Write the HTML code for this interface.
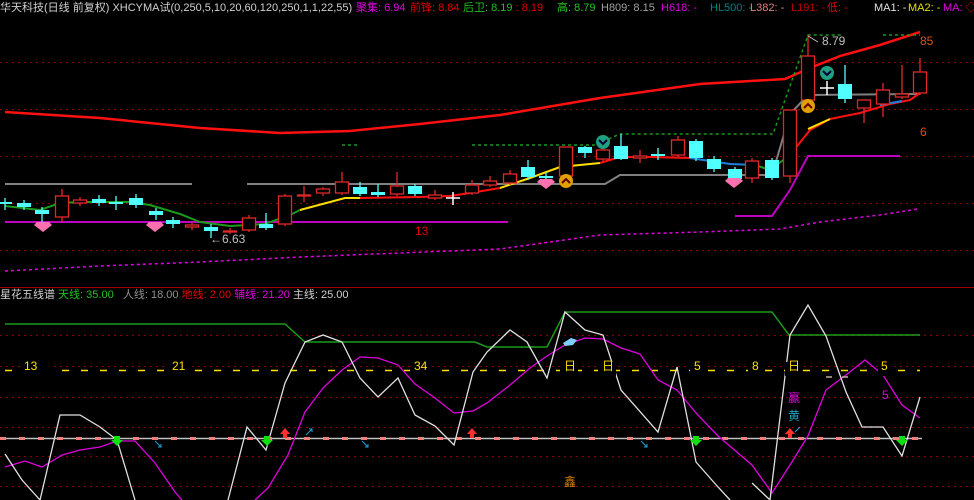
<!DOCTYPE html>
<html><head><meta charset="utf-8"><style>
body{margin:0;background:#000;width:974px;height:500px;overflow:hidden;font-family:"Liberation Sans","Noto Sans CJK SC",sans-serif}
.t{position:absolute;font-size:11px;white-space:nowrap;line-height:14px}
svg{position:absolute;left:0;top:0}
</style></head><body>
<svg width="974" height="500" viewBox="0 0 974 500">
<g stroke="#8a0000" stroke-dasharray="2,4" stroke-width="1">
<line x1="0" y1="62.5" x2="974" y2="62.5"/><line x1="0" y1="109.5" x2="974" y2="109.5"/><line x1="0" y1="156.5" x2="974" y2="156.5"/><line x1="0" y1="203.5" x2="974" y2="203.5"/><line x1="0" y1="250.5" x2="974" y2="250.5"/>
<line x1="0" y1="335.5" x2="974" y2="335.5"/><line x1="0" y1="366.5" x2="974" y2="366.5"/><line x1="0" y1="397.5" x2="974" y2="397.5"/><line x1="0" y1="427.5" x2="974" y2="427.5"/><line x1="0" y1="456.5" x2="974" y2="456.5"/><line x1="0" y1="486.5" x2="974" y2="486.5"/>
</g>
<line x1="0" y1="287.5" x2="974" y2="287.5" stroke="#a00000"/>
<polyline fill="none" stroke="#ff1010" stroke-width="2.5" points="5,112 100,118 200,128 280,133 350,131 420,124 500,115 600,98 700,84 785,79 810,68 840,56 880,45 920,32"/>
<polyline fill="none" stroke="#808080" stroke-width="2" points="5,184 192,184"/>
<polyline fill="none" stroke="#808080" stroke-width="2" points="247,184 605,184 620,175 772,175 790,114 808,95 920,94"/>
<g fill="none" stroke="#1a9a1a" stroke-dasharray="3,3" stroke-width="1.5">
<polyline points="342,145 360,145"/><polyline points="472,145 595,145 620,134 773,134 808,35 843,35"/><polyline points="883,35 920,35"/>
</g>
<polyline fill="none" stroke="#c000c0" stroke-width="2" points="5,222 508,222"/>
<polyline fill="none" stroke="#c000c0" stroke-width="2" points="735,216 772,216 790,190 808,156 900,156"/>
<polyline fill="none" stroke="#e000e0" stroke-width="1.5" stroke-dasharray="3,3" points="5,271 100,266 200,262 300,257 400,253 500,249 600,235 700,232 780,229 820,222 880,215 918,209"/>
<polyline fill="none" stroke="#1a9a1a" stroke-width="2" points="5,206 40,210 60,203 80,202 130,202 150,205 180,214 200,222 230,226 265,224 290,215 300,210"/>
<polyline fill="none" stroke="#ffe000" stroke-width="2" points="300,210 345,198 360,198"/>
<polyline fill="none" stroke="#ff1010" stroke-width="2" points="360,198 420,197 450,196 470,193 500,188"/>
<polyline fill="none" stroke="#ffe000" stroke-width="2" points="500,188 530,178 560,167 600,163"/>
<polyline fill="none" stroke="#ff1010" stroke-width="2" points="600,163 620,157 650,157 690,158"/>
<polyline fill="none" stroke="#2080e0" stroke-width="2" points="690,158 730,164 755,165"/>
<polyline fill="none" stroke="#1a9a1a" stroke-width="2" points="755,165 770,170 790,155"/>
<polyline fill="none" stroke="#ff1010" stroke-width="2" points="790,155 810,130 830,119"/>
<polyline fill="none" stroke="#ffe000" stroke-width="2" points="808,129 830,119"/>
<polyline fill="none" stroke="#ff1010" stroke-width="2" points="830,119 860,113 890,104 910,100 920,93"/>
<polyline fill="none" stroke="#2080e0" stroke-width="2" points="880,105 902,101"/>
<g id="c"></g>
<g fill="#ff70b0"><path d="M37,222 h12 l3,3 -9,7 -9,-7z"/><path d="M149,222 h12 l3,3 -9,7 -9,-7z"/><path d="M540,179 h12 l3,3 -9,7 -9,-7z"/><path d="M728,178 h12 l3,3 -9,7 -9,-7z"/></g>
<g><circle cx="566" cy="181" r="7" fill="#e0a000"/><path d="M562,183 l4,-4 4,4" stroke="#600" stroke-width="2" fill="none"/>
<circle cx="808" cy="106" r="7" fill="#e0a000"/><path d="M804,108 l4,-4 4,4" stroke="#600" stroke-width="2" fill="none"/>
<circle cx="603" cy="142" r="7" fill="#20a080"/><path d="M599,140 l4,4 4,-4" stroke="#003" stroke-width="2" fill="none"/>
<circle cx="827" cy="73" r="7" fill="#20a080"/><path d="M823,71 l4,4 4,-4" stroke="#003" stroke-width="2" fill="none"/></g>
<text x="822" y="45" fill="#c0c0c0" font-size="12" font-family="Liberation Sans">8.79</text>
<path d="M808,36 l10,6" stroke="#c0c0c0"/>
<text x="210" y="243" fill="#c0c0c0" font-size="12" font-family="Liberation Sans">←6.63</text>
<text x="415" y="235" fill="#e00000" font-size="12" font-family="Liberation Sans">13</text>
<text x="920" y="45" fill="#e05010" font-size="12" font-family="Liberation Sans">85</text>
<text x="920" y="136" fill="#e05010" font-size="12" font-family="Liberation Sans">6</text>
<polyline fill="none" stroke="#1a9a1a" stroke-width="1.5" points="5,324 285,324 305,342 475,342 487,347 547,347 565,312 772,312 789,335 920,335"/>
<line x1="0" y1="438.5" x2="922" y2="438.5" stroke="#c0c0c0" stroke-width="1.5"/>
<line x1="0" y1="438.5" x2="922" y2="438.5" stroke="#f08080" stroke-width="3" stroke-dasharray="6,13"/>
<line x1="5" y1="370.5" x2="920" y2="370.5" stroke="#ffe000" stroke-width="1.5" stroke-dasharray="7,12"/>
<polyline fill="none" stroke="#e000e0" stroke-width="1.3" points="5,467 25,461 42,467 62,455 80,450 100,447 117,441 135,441 155,463 175,492 182,500"/>
<polyline fill="none" stroke="#e000e0" stroke-width="1.3" points="255,500 268,488 288,455 305,412 323,388 342,370 360,357 378,358 398,365 415,384 435,398 454,413 473,411 487,403 510,385 530,368 547,356 565,345 585,338 603,339 621,348 640,354 658,380 677,390 696,413 718,436 752,465 772,493 790,465 808,436 826,390 846,375 865,360 883,375 902,405 920,418"/>
<polyline fill="none" stroke="#e0e0e0" stroke-width="1.3" points="5,454 22,480 40,500 60,415 80,415 100,427 117,440 135,500"/>
<polyline fill="none" stroke="#e0e0e0" stroke-width="1.3" points="228,500 247,427 266,450 285,383 305,342 323,335 342,342 360,378 378,397 398,378 415,415 435,426 454,445 473,372 487,352 510,330 527,342 547,378 565,312 585,330 603,335 621,390 658,432 677,367 696,462 718,487 730,500"/>
<polyline fill="none" stroke="#e0e0e0" stroke-width="1.3" points="752,483 770,500 790,335 808,305 826,336 846,392 862,427 883,427 902,456 920,397"/>
<g fill="#000"><rect x="20" y="362" width="30" height="14"/><rect x="168" y="362" width="22" height="14"/><rect x="410" y="362" width="22" height="14"/><rect x="560" y="362" width="18" height="14"/><rect x="598" y="362" width="18" height="14"/><rect x="690" y="362" width="16" height="14"/><rect x="748" y="362" width="16" height="14"/><rect x="785" y="362" width="18" height="14"/><rect x="878" y="362" width="16" height="14"/></g>
<g fill="#ffe000" font-size="12" font-family="Liberation Sans,Noto Sans CJK SC,sans-serif">
<text x="24" y="370">13</text><text x="172" y="370">21</text><text x="414" y="370">34</text><text x="564" y="370">日</text><text x="602" y="370">日</text><text x="694" y="370">5</text><text x="752" y="370">8</text><text x="788" y="370">日</text><text x="881" y="370">5</text></g>
<line x1="826" y1="377" x2="852" y2="377" stroke="#c0b0a0" stroke-width="1.5" stroke-dasharray="6,10"/>
<text x="882" y="399" fill="#e000e0" font-size="12" font-family="Liberation Sans">5</text>
<text x="788" y="402" fill="#e000e0" font-size="12" font-family="Noto Sans CJK SC,sans-serif">赢</text>
<text x="788" y="420" fill="#20a0c0" font-size="12" font-family="Noto Sans CJK SC,sans-serif">黄</text>
<text x="564" y="486" fill="#d08000" font-size="12" font-family="Noto Sans CJK SC,sans-serif">鑫</text>
<path d="M563,343 l8,-5 6,2 -4,5 -8,1z" fill="#80d0ff"/>
<g fill="#10e010"><path d="M114,436 h6 v4 h3 l-6,6 -6,-6 h3z"/><path d="M264,436 h6 v4 h3 l-6,6 -6,-6 h3z"/><path d="M693,436 h6 v4 h3 l-6,6 -6,-6 h3z"/><path d="M899,436 h6 v4 h3 l-6,6 -6,-6 h3z"/></g>
<g fill="#ff3030"><path d="M283,438 h4 v-4 h3 l-5,-6 -5,6 h3z"/><path d="M470,438 h4 v-4 h3 l-5,-6 -5,6 h3z"/><path d="M788,438 h4 v-4 h3 l-5,-6 -5,6 h3z"/></g>
<g stroke="#20a0e0" stroke-width="1"><path d="M155,441 l6,6 m0,-3 v3 h-3"/><path d="M362,441 l6,6 m0,-3 v3 h-3"/><path d="M641,441 l6,6 m0,-3 v3 h-3"/><path d="M306,435 l6,-6 m-3,0 h3 v3"/><path d="M795,432 l5,-5"/></g>
</svg>
<div class="t" style="left:0;top:1px;color:#d0d0d0">华天科技(日线 前复权) XHCYMA试(0,250,5,10,20,60,120,250,1,1,22,55)</div>
<div class="t" style="left:356px;top:1px;color:#e000e0">聚集: 6.94</div>
<div class="t" style="left:410px;top:1px;color:#e00000">前锋: 8.84</div>
<div class="t" style="left:463px;top:1px;color:#20c020">后卫: 8.19 <span style="color:#e00000">: 8.19</span></div>
<div class="t" style="left:557px;top:1px;color:#20c020">高: 8.79</div>
<div class="t" style="left:601px;top:1px;color:#a0a0a0">H809: 8.15</div>
<div class="t" style="left:661px;top:1px;color:#e000e0">H618: -</div>
<div class="t" style="left:710px;top:1px;color:#008080">HL500: -</div>
<div class="t" style="left:750px;top:1px;color:#e08080">L382: -</div>
<div class="t" style="left:791px;top:1px;color:#c00000">L191: -</div>
<div class="t" style="left:827px;top:1px;color:#e00000">低: -</div>
<div class="t" style="left:874px;top:1px;color:#e0e0e0">MA1: -</div>
<div class="t" style="left:908px;top:1px;color:#e0e000">MA2: -</div>
<div class="t" style="left:943px;top:1px;color:#e000e0">MA: <span style="color:#e00000">◇</span></div>
<div class="t" style="left:0;top:288px;color:#d0d0d0">星花五线谱 <span style="color:#20c020">天线: 35.00</span> &nbsp; <span style="color:#909090">人线: 18.00</span> <span style="color:#e00000">地线: 2.00</span> <span style="color:#e000e0">辅线: 21.20</span> <span style="color:#d0d0d0">主线: 25.00</span></div>
<script>
var C=[[5,202,202,198,210,'c'],[24,203,207,200,210,'c'],[42,210,214,207,222,'c'],[62,196,217,189,222,'r'],[80,200,203,197,206,'r'],[99,199,203,195,206,'c'],[116,202,202,196,210,'c'],[136,198,205,194,208,'c'],[156,211,215,208,220,'c'],[173,220,224,217,228,'c'],[192,225,227,222,230,'r'],[211,227,231,224,238,'c'],[230,231,232,228,234,'r'],[249,218,230,215,232,'r'],[266,224,228,213,230,'c'],[285,196,224,194,226,'r'],[304,195,195,186,202,'r'],[323,189,193,187,196,'r'],[342,182,193,172,195,'r'],[360,187,194,182,196,'c'],[378,192,195,184,197,'c'],[397,186,194,172,196,'r'],[415,186,194,184,196,'c'],[435,195,198,190,200,'r'],[472,185,193,180,195,'r'],[490,181,185,176,187,'r'],[510,174,183,170,185,'r'],[528,167,177,160,180,'c'],[546,176,178,172,182,'c'],[566,147,176,147,177,'r'],[585,147,153,146,158,'c'],[603,150,159,148,161,'r'],[621,146,159,134,160,'c'],[640,156,158,150,163,'r'],[658,154,154,148,160,'c'],[678,140,155,136,157,'r'],[696,141,158,139,161,'c'],[714,159,169,156,172,'c'],[735,169,179,167,181,'c'],[752,161,178,158,183,'r'],[772,160,178,158,180,'c'],[790,110,176,110,183,'r'],[808,56,100,35,100,'r'],[845,84,99,65,103,'c'],[864,100,108,100,123,'r'],[883,90,104,83,117,'r'],[902,94,97,65,99,'r'],[920,72,93,58,95,'r']];
var s='';C.forEach(function(a){var x=a[0],col=a[5]=='r'?'#e02828':'#50ffff',h=Math.max(a[2]-a[1],1);
s+='<line x1="'+x+'" y1="'+a[3]+'" x2="'+x+'" y2="'+a[4]+'" stroke="'+col+'" stroke-width="1.3"/>';
if(a[5]=='r')s+='<rect x="'+(x-6.5)+'" y="'+a[1]+'" width="13" height="'+h+'" fill="#000" stroke="'+col+'" stroke-width="1.3"/>';
else s+='<rect x="'+(x-7)+'" y="'+a[1]+'" width="14" height="'+Math.max(h,2)+'" fill="'+col+'"/>';});
s+='<path d="M453,192 v13 M446,198 h14 M827,81 v14 M820,88 h14" stroke="#fff" stroke-width="1.5"/>';
document.getElementById('c').innerHTML=s;
</script>
</body></html>
